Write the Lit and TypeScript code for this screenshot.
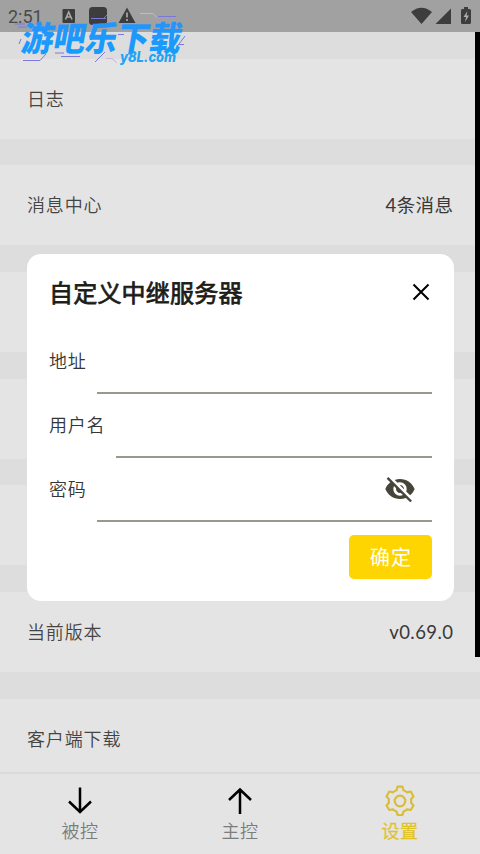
import { LitElement, html, css, svg } from "lit";
import { customElement, property } from "lit/decorators.js";

const fonts = css`"Noto Sans CJK SC", sans-serif`;

@customElement("status-bar")
class StatusBar extends LitElement {
  static styles = css`
    :host { display: block; height: 32px; background: #a1a1a1; font-family: Roboto, sans-serif; }
    .bar { display: flex; justify-content: space-between; height: 32px; }
    .time { font-size: 18px; line-height: 34px; color: #4a4a4a; padding-left: 8px; width: 54px; box-sizing: border-box; }
    .left { display: flex; }
    svg { display: block; }
  `;
  render() {
    return html`<div class="bar">
      <div class="left">
        <span class="time">2:51</span>
        <svg width="86" height="32" viewBox="54 0 86 32" fill="#3d3d3d">
          <rect x="62.500" y="9" width="12.500" height="14" rx="1" />
          <path d="M65.500 19.500L68.700 12L72 19.500M66.500 17H71" fill="none" stroke="#a9a9a9" stroke-width="1.600" />
          <rect x="89" y="7" width="18" height="18" rx="3.500" />
          <path d="M127 7.500L135.500 23H118.500Z" />
          <path d="M127 12.500V17.500M127 19V21" stroke="#a9a9a9" stroke-width="1.700" />
        </svg>
      </div>
      <svg width="72" height="32" viewBox="408 0 72 32" fill="#3d3d3d">
        <path d="M411 12Q421.500 3.500 432 12L421.500 24Z" />
        <path d="M451 8.500V24H435.500Z" />
        <path d="M462 9H464V7H468V9H469.500Q471 9 471 10.500V22.500Q471 24 469.500 24H462.500Q461 24 461 22.500V10.500Q461 9 462 9Z" />
        <path d="M467.500 11L463.500 17H466L465 22L469 15.500H466.500Z" fill="#b0b0b0" />
      </svg>
    </div>`;
  }
}

@customElement("settings-row")
class SettingsRow extends LitElement {
  @property() label = "";
  @property() value = "";
  static styles = css`
    :host {
      display: flex; justify-content: space-between; align-items: center;
      height: 80px; flex: none; box-sizing: border-box; padding: 0 26.500px 2px 27px;
      background: #e4e4e4; color: #444;
      font: 350 18px/26px ${fonts}; letter-spacing: 0.85px;
    }
    .value { padding-top: 1px; color: #383838; font-family: Lato, ${fonts}; font-weight: 400; font-size: 18.500px; letter-spacing: 0.45px; }
  `;
  render() {
    return html`<span>${this.label}</span><span class="value">${this.value}</span>`;
  }
}

@customElement("form-field")
class FormField extends LitElement {
  @property() label = "";
  @property({ type: Boolean }) secret = false;
  static styles = css`
    :host { display: flex; height: 64px; gap: 11px; font: 350 18px/26px ${fonts}; letter-spacing: 0.7px; color: #363636; }
    .label { padding-top: 16.500px; flex: none; }
    .input {
      flex: 1; height: 63.500px; box-sizing: border-box; border-bottom: 2px solid #9a988e;
      display: flex; justify-content: flex-end; align-items: center; padding-right: 16px;
    }
    svg { display: block; }
  `;
  render() {
    return html`<span class="label">${this.label}</span>
      <div class="input">
        ${this.secret
          ? html`<svg width="32" height="32" viewBox="0 0 24 24" fill="#47453a">
              <path d="M12 7c2.760 0 5 2.240 5 5 0 .65-.13 1.260-.36 1.830l2.920 2.920c1.510-1.260 2.700-2.890 3.430-4.750-1.730-4.390-6-7.500-11-7.500-1.400 0-2.740.25-3.980.7l2.160 2.160C10.740 7.130 11.350 7 12 7zM2 4.270l2.280 2.280.46.46C3.080 8.300 1.780 10.020 1 12c1.730 4.390 6 7.500 11 7.500 1.550 0 3.030-.3 4.380-.84l.42.42L19.730 22 21 20.730 3.270 3 2 4.270zM7.530 9.800l1.550 1.550c-.05.21-.08.43-.08.65 0 1.660 1.340 3 3 3 .22 0 .44-.03.65-.08l1.550 1.550c-.67.33-1.410.53-2.200.53-2.760 0-5-2.240-5-5 0-.79.2-1.530.53-2.200zm4.310-.78l3.150 3.150.02-.16c0-1.660-1.340-3-3-3l-.17.01z" />
            </svg>`
          : ""}
      </div>`;
  }
}

@customElement("relay-dialog")
class RelayDialog extends LitElement {
  static styles = css`
    :host {
      display: block; box-sizing: border-box; width: 427px; height: 347px; padding: 0 21.500px 0 22.500px;
      border-radius: 14px; background: #fff; font-family: ${fonts};
    }
    .head { display: flex; justify-content: space-between; align-items: center; height: 77px; }
    .title { font-size: 24px; line-height: 36px; font-weight: 400; -webkit-text-stroke: 0.75px #1c1c17; letter-spacing: 0.2px; color: #1c1c17; }
    .close { display: block; margin-right: 1px; }
    .actions { display: flex; justify-content: flex-end; padding-top: 12px; }
    .ok {
      width: 83px; height: 44px; border-radius: 5px; background: #fed500; color: #fff;
      font-size: 20px; line-height: 44px; text-align: center; letter-spacing: 1px; text-indent: 1px;
    }
  `;
  render() {
    return html`<div class="head">
        <span class="title">自定义中继服务器</span>
        <svg class="close" width="20" height="20" viewBox="0 0 20 20" fill="none" stroke="#000" stroke-width="2">
          <path d="M2.500 2.500L17.500 17.500M17.500 2.500L2.500 17.500" />
        </svg>
      </div>
      <form-field label="地址"></form-field>
      <form-field label="用户名"></form-field>
      <form-field label="密码" secret></form-field>
      <div class="actions"><div class="ok">确定</div></div>`;
  }
}

@customElement("tab-bar")
class TabBar extends LitElement {
  static styles = css`
    :host { display: flex; height: 82px; box-sizing: border-box; border-top: 2px solid #dadada; background: #e4e4e4; font: 350 18px/24px ${fonts}; letter-spacing: 0.5px; }
    .tab { flex: 1; display: flex; flex-direction: column; align-items: center; padding-top: 10px; color: #7c7c7c; }
    .active { color: #dfc323; -webkit-text-stroke: 0.3px #dfc323; }
    svg { display: block; height: 34px; }
  `;
  render() {
    return html`
      <div class="tab">
        <svg width="34" viewBox="0 0 34 34" fill="none" stroke="#000" stroke-width="2.500"><path d="M17 3.500V28M6 17.500L17 28L28 17.500" /></svg>
        <span>被控</span>
      </div>
      <div class="tab">
        <svg width="34" viewBox="0 0 34 34" fill="none" stroke="#000" stroke-width="2.500"><path d="M17 30V5.500M6 16L17 5.500L28 16" /></svg>
        <span>主控</span>
      </div>
      <div class="tab active">
        <svg width="34" viewBox="0 0 34 34" fill="none" stroke="#d9bd3a" stroke-width="2.200" stroke-linejoin="round">
          <path d="M14.500 2.700H19.500L20.500 6.200Q22.500 6.800 24 8.300L27.700 7.500L30.500 12.500L28 15.200Q28.500 17 28 18.800L30.500 21.500L27.700 26L24 25.300Q22.500 26.700 20.500 27.500L19.500 31H14.500L13.500 27.500Q11.500 26.700 10 25.300L6.300 26L3.500 21.500L6 18.800Q5.500 17 6 15.200L3.500 12.500L6.300 7.500L10 8.300Q11.500 6.800 13.500 6.200Z" />
          <circle cx="17" cy="17" r="5.300" />
        </svg>
        <span>设置</span>
      </div>`;
  }
}

@customElement("site-mark")
class SiteMark extends LitElement {
  static styles = css`
    :host { display: block; }
    svg { display: block; }
    .name { font: 900 32px ${fonts}; }
    .site { font: italic 800 14px Inter, sans-serif; }
  `;
  render() {
    return html`<svg width="180" height="60" viewBox="12 8 180 60">
      <defs>
        <linearGradient id="ink" x1="0" y1="0" x2="0" y2="1">
          <stop offset="0" stop-color="#2d91f8" /><stop offset="1" stop-color="#109fff" />
        </linearGradient>
      </defs>
      ${svg`<g fill="none" stroke="#7b78dc" stroke-width="1">
        <path d="M15 24H25M18 27H27M91 18.500H106M103 19L107 15M158 16.500H176M179 44.500H184M185 36L176 48M23 60.500H40L46 54M55 53H64M61 56.500H80M95 62L105 52M118 34.500H124M21 39L19 44" />
        <path d="M140 13.500H153L157 17.500M106 58.500H112L117 63" stroke="#c5b5dc" />
      </g>`}
      <text class="name" transform="translate(20 50.500) skewX(-10) scale(1.010 1.070)" textLength="158" lengthAdjust="spacingAndGlyphs" fill="url(#ink)">游吧乐下载</text>
      <text class="site" x="120" y="62" textLength="56" lengthAdjust="spacingAndGlyphs" fill="#20a5f5">y8L.com</text>
    </svg>`;
  }
}

@customElement("app-root")
class AppRoot extends LitElement {
  static styles = css`
    :host { display: block; position: relative; width: 480px; height: 854px; overflow: hidden; background: #dddddd; }
    .page { display: flex; flex-direction: column; height: 854px; }
    .list { flex: 1; min-height: 0; overflow: hidden; display: flex; flex-direction: column; gap: 26.700px; padding-top: 26.700px; }
    .edge { position: absolute; right: 0; top: 32px; width: 5px; height: 625px; background: #000; }
    .modal { position: absolute; left: 26.500px; top: 253.500px; }
    .mark { position: absolute; left: 12px; top: 8px; }
  `;
  render() {
    const rows = [
      ["日志", ""], ["消息中心", "4条消息"], ["", ""], ["", ""], ["", ""],
      ["当前版本", "v0.69.0"], ["客户端下载", ""],
    ];
    return html`<div class="page">
        <status-bar></status-bar>
        <div class="list">${rows.map(([l, v]) => html`<settings-row .label=${l} .value=${v}></settings-row>`)}</div>
        <tab-bar></tab-bar>
      </div>
      <div class="edge"></div>
      <relay-dialog class="modal"></relay-dialog>
      <site-mark class="mark"></site-mark>`;
  }
}
